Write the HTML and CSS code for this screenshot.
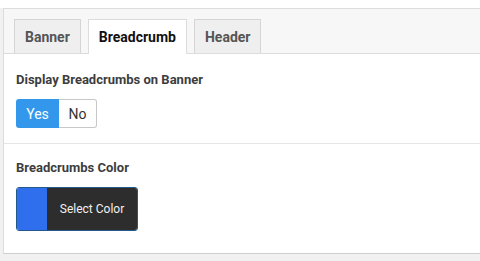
FILE: index.html
```html
<!DOCTYPE html>
<html>
<head>
<meta charset="utf-8">
<link rel="stylesheet" href="styles.css">
</head>
<body>
<div class="topstrip"></div>
<div class="panel">
  <div class="tabbar">
    <div class="tab">Banner</div>
    <div class="tab active">Breadcrumb</div>
    <div class="tab">Header</div>
  </div>
  <div class="section first">
    <div class="label">Display Breadcrumbs on Banner</div>
    <div class="btngroup">
      <span class="seg on">Yes</span><span class="seg off">No</span>
    </div>
  </div>
  <div class="section second">
    <div class="label">Breadcrumbs Color</div>
    <div class="colorbtn">
      <span class="swatch"></span><span class="ctext">Select Color</span>
    </div>
  </div>
</div>
</body>
</html>
```
FILE: styles.css
```css
html, body {
  margin: 0;
  padding: 0;
}
body {
  background: #f1f1f1;
  font-family: Roboto, "Liberation Sans", sans-serif;
  width: 480px;
  height: 261px;
  overflow: hidden;
}
.topstrip {
  height: 8px;
  background: #fff;
}
.panel {
  margin-left: 3px;
  border-left: 1px solid #dcdcdc;
  border-top: 1px solid #dcdcdc;
  border-bottom: 1px solid #cfcfcf;
  background: #fff;
}
.tabbar {
  display: flex;
  gap: 7px;
  align-items: flex-end;
  background: #f7f7f7;
  border-bottom: 1px solid #dcdcdc;
  padding: 10px 0 0 10px;
  height: 34px;
}
.tab {
  height: 34px;
  box-sizing: border-box;
  border: 1px solid #d5d5d5;
  border-bottom: none;
  background: #efefef;
  padding: 0 10px;
  font-size: 14px;
  font-weight: 700;
  color: #555;
  display: flex;
  align-items: center;
}
.tab.active {
  background: #fff;
  color: #111;
  height: 35px;
  margin-bottom: -1px;
  border-color: #dcdcdc;
}
.section {
  padding-left: 12px;
}
.section.first {
  padding-top: 17px;
  height: 72px;
  border-bottom: 1px solid #e6e6e6;
}
.section.second {
  padding-top: 15px;
  height: 94px;
}
.label {
  font-size: 13px;
  font-weight: 700;
  color: #3d3d3d;
  line-height: 18px;
}
.btngroup {
  display: inline-flex;
  margin-top: 10px;
  height: 29px;
  font-size: 14px;
}
.seg {
  display: flex;
  align-items: center;
  justify-content: center;
  box-sizing: border-box;
}
.seg.on {
  width: 43px;
  background: #3398ec;
  color: #fff;
  border-radius: 3px 0 0 3px;
}
.seg.off {
  width: 38px;
  background: #fff;
  color: #333;
  border: 1px solid #c8c8c8;
  border-left: none;
  border-radius: 0 3px 3px 0;
}
.colorbtn {
  display: flex;
  margin-top: 10px;
  width: 122px;
  height: 44px;
  box-sizing: border-box;
  border: 1px solid #22588a;
  border-radius: 3px;
  overflow: hidden;
}
.swatch {
  width: 30px;
  background: #2f6fee;
}
.ctext {
  flex: 1;
  background: #2d2d2d;
  color: #f0f0f0;
  font-size: 12px;
  display: flex;
  align-items: center;
  justify-content: center;
}
```
